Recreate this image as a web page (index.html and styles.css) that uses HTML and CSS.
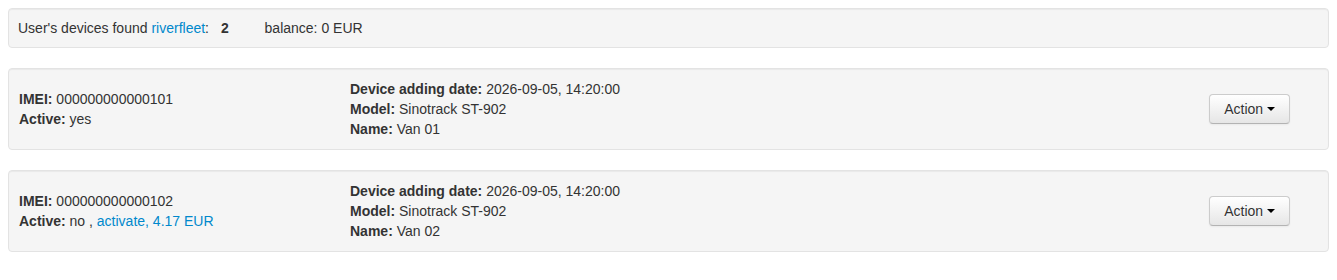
FILE: index.html
```html
<!DOCTYPE html>
<html lang="en">
<head>
    <meta charset="UTF-8">
    <title>Devices</title>
    <link rel="stylesheet" href="styles.css">
</head>
<body>
    <div class="well well-small summary">
        User's devices found <a href="#">riverfleet</a>:
        <b class="count">2</b>
        <span class="balance">balance: 0 EUR</span>
    </div>

    <div class="well device">
        <div class="col-main">
            <div><b>IMEI:</b> 000000000000101</div>
            <div><b>Active:</b> yes</div>
        </div>
        <div class="col-info">
            <div><b>Device adding date:</b> 2026-09-05, 14:20:00</div>
            <div><b>Model:</b> Sinotrack ST-902</div>
            <div><b>Name:</b> Van 01</div>
        </div>
        <div class="col-action">
            <button class="btn">Action <span class="caret"></span></button>
        </div>
    </div>

    <div class="well device">
        <div class="col-main">
            <div><b>IMEI:</b> 000000000000102</div>
            <div><b>Active:</b> no , <a href="#">activate, 4.17 EUR</a></div>
        </div>
        <div class="col-info">
            <div><b>Device adding date:</b> 2026-09-05, 14:20:00</div>
            <div><b>Model:</b> Sinotrack ST-902</div>
            <div><b>Name:</b> Van 02</div>
        </div>
        <div class="col-action">
            <button class="btn">Action <span class="caret"></span></button>
        </div>
    </div>
</body>
</html>
```

FILE: styles.css
```css
/* Base */
body {
    margin: 8px;
    font-family: "Liberation Sans", Arial, sans-serif;
    font-size: 14px;
    line-height: 20px;
    color: #333333;
    background-color: #ffffff;
}
a {
    color: #0088cc;
    text-decoration: none;
}
b {
    font-weight: bold;
}

/* Wells */
.well {
    background-color: #f5f5f5;
    border: 1px solid #e3e3e3;
    border-radius: 4px;
    box-shadow: inset 0 1px 1px rgba(0, 0, 0, 0.05);
    margin-bottom: 20px;
    padding: 10px;
}
.well-small {
    padding: 9px;
}
.count {
    margin-left: 8px;
}
.balance {
    margin-left: 32px;
}

/* Device rows */
.device {
    display: grid;
    grid-template-columns: 331px 1fr auto;
    align-items: center;
    padding: 10px;
}
.col-action {
    padding-right: 28px;
}

/* Button */
.btn {
    font-family: inherit;
    font-size: 14px;
    line-height: 20px;
    color: #333333;
    padding: 4px 14px;
    background-color: #f5f5f5;
    background-image: linear-gradient(to bottom, #ffffff, #e6e6e6);
    border: 1px solid #cccccc;
    border-bottom-color: #b3b3b3;
    border-radius: 4px;
    box-shadow: inset 0 1px 0 rgba(255, 255, 255, 0.2), 0 1px 2px rgba(0, 0, 0, 0.05);
    text-shadow: 0 1px 1px rgba(255, 255, 255, 0.75);
    cursor: pointer;
}
.caret {
    display: inline-block;
    width: 0;
    height: 0;
    vertical-align: top;
    margin-top: 8px;
    border-top: 4px solid #000000;
    border-left: 4px solid transparent;
    border-right: 4px solid transparent;
}
```
